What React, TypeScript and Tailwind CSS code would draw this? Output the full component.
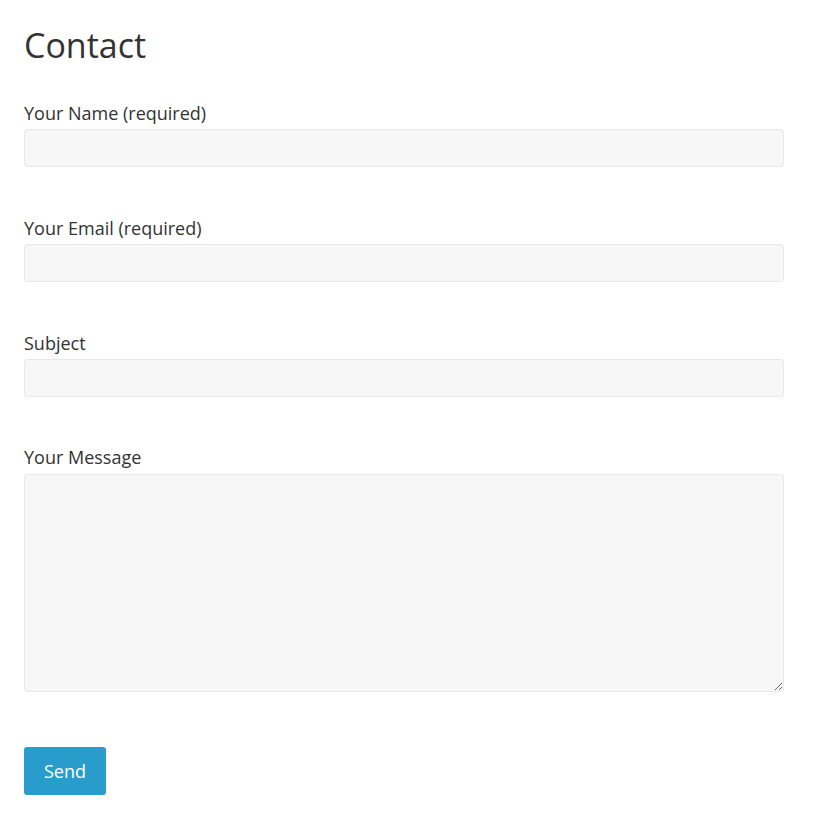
export default function App() {
  const fieldCls =
    'block w-full rounded-[3px] border border-[#e8e8e8] bg-[#f7f7f7] px-3 text-[16px] text-[#333] outline-none';
  const labelCls = 'block text-[18px] leading-[27px] text-[#333]';

  return (
    <div className="min-h-screen bg-white px-6 pt-6 font-['Open_Sans',sans-serif] text-[#333]">
      <div className="w-[760px]">
        <h1 className="mb-[33px] text-[34px] leading-[43px] font-normal text-[#333]">Contact</h1>

        <form onSubmit={(e) => e.preventDefault()}>
          <div className="mb-[48px]">
            <label className={labelCls}>Your Name (required)</label>
            <input type="text" className={`${fieldCls} mt-[2px] h-[38px]`} />
          </div>
          <div className="mb-[48px]">
            <label className={labelCls}>Your Email (required)</label>
            <input type="email" className={`${fieldCls} mt-[2px] h-[38px]`} />
          </div>
          <div className="mb-[47px]">
            <label className={labelCls}>Subject</label>
            <input type="text" className={`${fieldCls} mt-[2px] h-[38px]`} />
          </div>
          <div className="mb-[55px]">
            <label className={labelCls}>Your Message</label>
            <textarea className={`${fieldCls} mt-[3px] h-[218px] py-2`} />
          </div>
          <button
            type="submit"
            className="h-[48px] w-[82px] rounded-[3px] bg-[#289dcc] text-[18px] text-white"
          >
            Send
          </button>
        </form>
      </div>
    </div>
  );
}
